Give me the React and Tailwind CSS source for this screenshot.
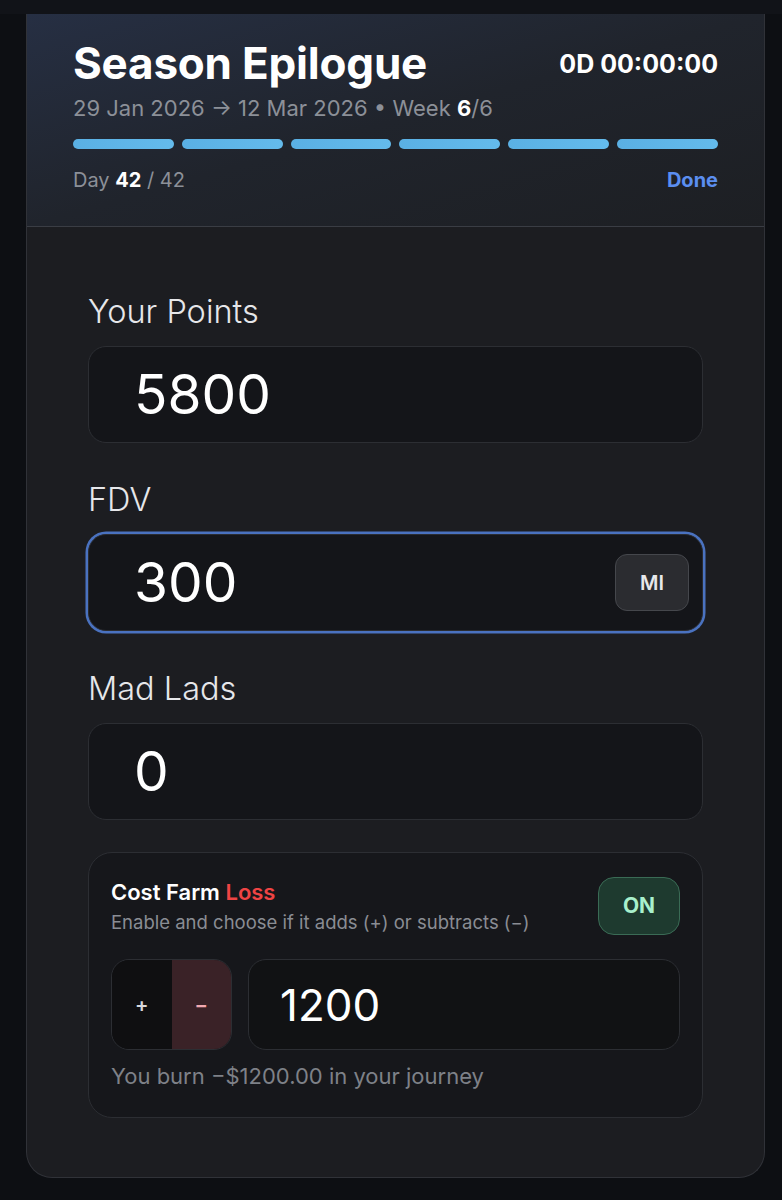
import React from "react";

const font = { fontFamily: "Inter, 'Noto Sans', sans-serif" };

function Field({ label, value, focused, suffix }) {
  return (
    <div className="flex flex-col">
      <div className="text-[32.5px] leading-[40px] text-[#e6e7ea] font-light">{label}</div>
      <div
        className={
          "mt-[14px] h-[97px] rounded-[18px] border bg-[#141519] flex items-center pl-[45px] pr-[13px] " +
          (focused ? "border-[#2a2c31] ring-[2.5px] ring-[#4a72c0]" : "border-[#2c2e33]")
        }
      >
        <div className="flex-1 text-[55px] leading-none text-white font-normal">{value}</div>
        {suffix && (
          <div className="w-[74px] h-[57px] rounded-[12px] bg-[#2b2c30] border border-[#45474c] flex items-center justify-center text-[20px] font-semibold text-[#e8e8ea]">
            {suffix}
          </div>
        )}
      </div>
    </div>
  );
}

export default function App() {
  return (
    <div className="min-h-[1200px] bg-[#0d0f13] flex flex-col" style={font}>
      <div className="h-[14px] bg-[#111318]" />
      <div className="mx-[26px] w-[739px] rounded-b-[26px] border border-t-0 border-[#303238] bg-[#1c1d21] overflow-hidden">
        {/* Header */}
        <div className="bg-linear-to-br from-[#262f43] via-[#20242c] to-[#1d1f23] border-b border-[#3a3d44] pt-[23px] px-[46px] pb-[33px]">
          <div className="flex items-center justify-between">
            <div className="text-[44px] leading-[52px] font-bold text-white tracking-[-0.2px]">Season Epilogue</div>
            <div className="text-[25px] leading-[30px] font-bold text-white mt-[2px]">0D 00:00:00</div>
          </div>
          <div className="mt-[5px] text-[22px] leading-[28px] text-[#8c9098]">
            29 Jan 2026 → 12 Mar 2026 • Week <span className="font-bold text-white">6</span>/6
          </div>
          <div className="mt-[17px] flex gap-[8px]">
            {[0, 1, 2, 3, 4, 5].map((i) => (
              <div key={i} className="flex-1 h-[10px] rounded-full bg-linear-to-r from-[#5ab0e4] to-[#64bbec]" />
            ))}
          </div>
          <div className="mt-[18px] flex items-center justify-between text-[20px] leading-[26px]">
            <div className="text-[#8c9098]">
              Day <span className="font-bold text-white">42</span> / 42
            </div>
            <div className="font-bold text-[#5b8ef0]">Done</div>
          </div>
        </div>

        {/* Body */}
        <div className="px-[61px] pt-[65px] pb-[59px] flex flex-col">
          <Field label="Your Points" value="5800" />
          <div className="mt-[37px]">
            <Field label="FDV" value="300" focused suffix="MI" />
          </div>
          <div className="mt-[38px]">
            <Field label="Mad Lads" value="0" />
          </div>

          <div className="mt-[32px] rounded-[24px] border border-[#2c2e33] bg-[#16171b] px-[22px] pt-[24px] pb-[27px]">
            <div className="flex items-center justify-between">
              <div className="flex flex-col">
                <div className="text-[22px] leading-[28px] font-semibold text-white">
                  Cost Farm <span className="text-[#ef4444]">Loss</span>
                </div>
                <div className="mt-[3px] text-[18.5px] leading-[26px] text-[#8a8d94]">
                  Enable and choose if it adds (+) or subtracts (−)
                </div>
              </div>
              <div className="w-[82px] h-[58px] rounded-[16px] bg-[#1e3a2f] border border-[#3a6b55] flex items-center justify-center text-[21px] font-bold text-[#a8f0cc]">
                ON
              </div>
            </div>
            <div className="mt-[24px] flex gap-[16px]">
              <div className="w-[121px] h-[91px] rounded-[18px] border border-[#2c2e33] overflow-hidden flex">
                <div className="flex-1 bg-[#0f0f11] flex items-center justify-center text-[20px] font-semibold text-[#d8d8dc]">+</div>
                <div className="flex-1 bg-[#3a2227] flex items-center justify-center text-[20px] font-semibold text-[#f2a9b1]">−</div>
              </div>
              <div className="flex-1 h-[91px] rounded-[18px] border border-[#2c2e33] bg-[#111214] flex items-center pl-[31px] text-[44px] leading-none text-white">
                1200
              </div>
            </div>
            <div className="mt-[12px] text-[22px] leading-[28px] text-[#7e8188]">
              You burn −$1200.00 in your journey
            </div>
          </div>
        </div>
      </div>
    </div>
  );
}
